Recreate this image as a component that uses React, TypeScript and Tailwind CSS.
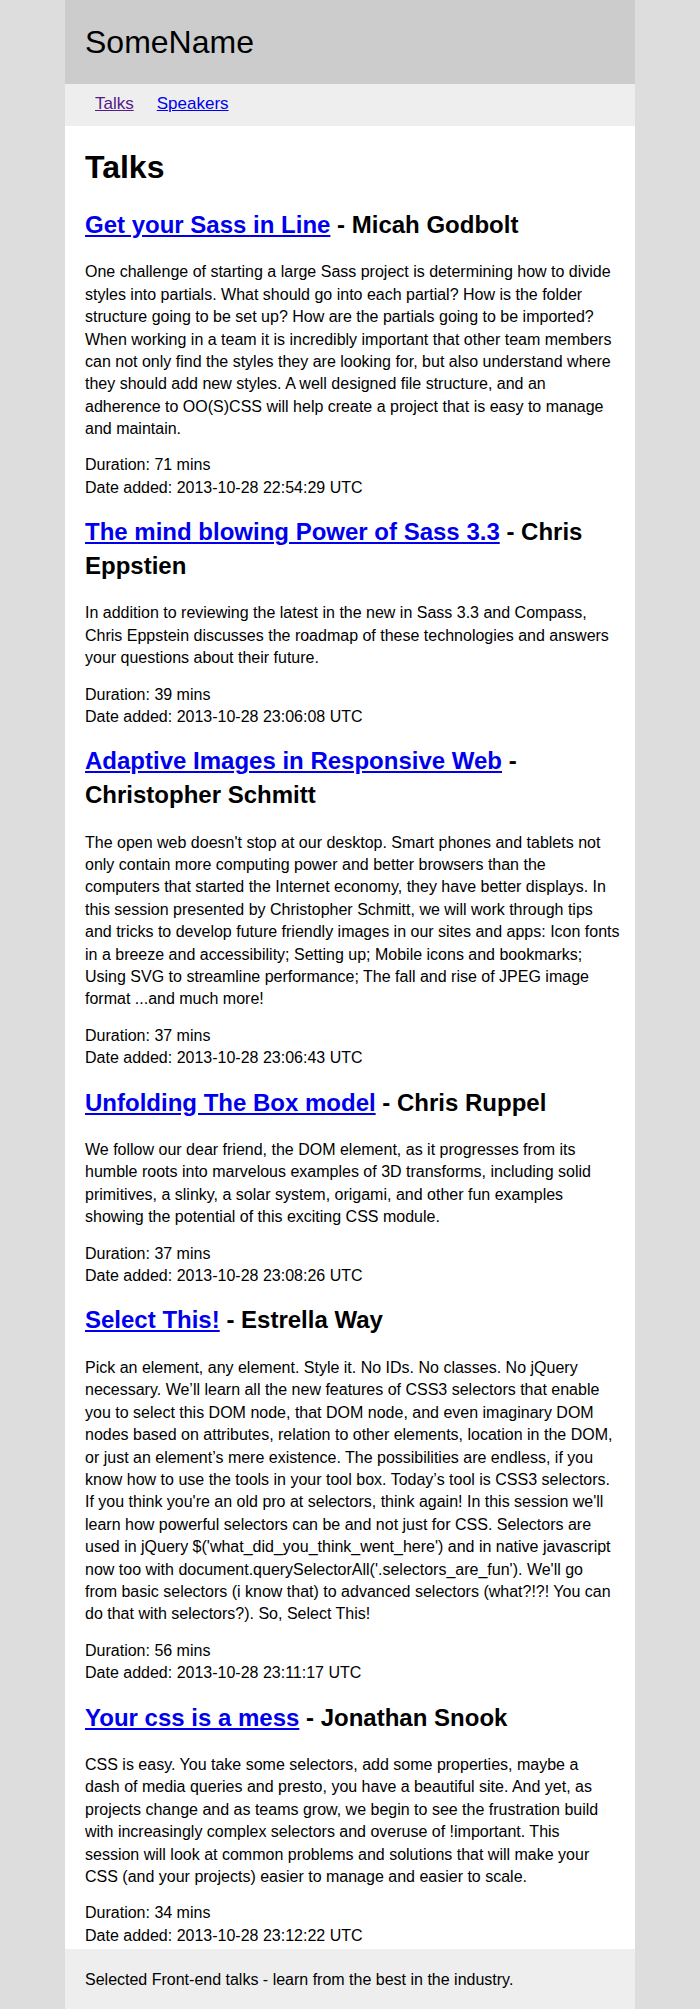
import React from "react";

type Talk = {
  title: string;
  speaker: string;
  description: string;
  duration: number;
  added: string;
  wide?: boolean;
};

const talks: Talk[] = [
  {
    title: "Get your Sass in Line",
    speaker: "Micah Godbolt",
    description:
      "One challenge of starting a large Sass project is determining how to divide styles into partials. What should go into each partial? How is the folder structure going to be set up? How are the partials going to be imported? When working in a team it is incredibly important that other team members can not only find the styles they are looking for, but also understand where they should add new styles. A well designed file structure, and an adherence to OO(S)CSS will help create a project that is easy to manage and maintain.",
    duration: 71,
    added: "2013-10-28 22:54:29 UTC",
  },
  {
    title: "The mind blowing Power of Sass 3.3",
    speaker: "Chris Eppstien",
    description:
      "In addition to reviewing the latest in the new in Sass 3.3 and Compass, Chris Eppstein discusses the roadmap of these technologies and answers your questions about their future.",
    duration: 39,
    added: "2013-10-28 23:06:08 UTC",
  },
  {
    title: "Adaptive Images in Responsive Web",
    speaker: "Christopher Schmitt",
    description:
      "The open web doesn't stop at our desktop. Smart phones and tablets not only contain more computing power and better browsers than the computers that started the Internet economy, they have better displays. In this session presented by Christopher Schmitt, we will work through tips and tricks to develop future friendly images in our sites and apps: Icon fonts in a breeze and accessibility; Setting up; Mobile icons and bookmarks; Using SVG to streamline performance; The fall and rise of JPEG image format ...and much more!",
    duration: 37,
    added: "2013-10-28 23:06:43 UTC",
    wide: true,
  },
  {
    title: "Unfolding The Box model",
    speaker: "Chris Ruppel",
    description:
      "We follow our dear friend, the DOM element, as it progresses from its humble roots into marvelous examples of 3D transforms, including solid primitives, a slinky, a solar system, origami, and other fun examples showing the potential of this exciting CSS module.",
    duration: 37,
    added: "2013-10-28 23:08:26 UTC",
  },
  {
    title: "Select This!",
    speaker: "Estrella Way",
    description:
      "Pick an element, any element. Style it. No IDs. No classes. No jQuery necessary. We\u2019ll learn all the new features of CSS3 selectors that enable you to select this DOM node, that DOM node, and even imaginary DOM nodes based on attributes, relation to other elements, location in the DOM, or just an element\u2019s mere existence. The possibilities are endless, if you know how to use the tools in your tool box. Today\u2019s tool is CSS3 selectors. If you think you're an old pro at selectors, think again! In this session we'll learn how powerful selectors can be and not just for CSS. Selectors are used in jQuery $('what_did_you_think_went_here') and in native javascript now too with document.querySelectorAll('.selectors_are_fun'). We'll go from basic selectors (i know that) to advanced selectors (what?!?! You can do that with selectors?). So, Select This!",
    duration: 56,
    added: "2013-10-28 23:11:17 UTC",
  },
  {
    title: "Your css is a mess",
    speaker: "Jonathan Snook",
    description:
      "CSS is easy. You take some selectors, add some properties, maybe a dash of media queries and presto, you have a beautiful site. And yet, as projects change and as teams grow, we begin to see the frustration build with increasingly complex selectors and overuse of !important. This session will look at common problems and solutions that will make your CSS (and your projects) easier to manage and easier to scale.",
    duration: 34,
    added: "2013-10-28 23:12:22 UTC",
  },
];

export default function App() {
  return (
    <div className="min-h-screen bg-[#dddddd] font-['Liberation_Sans',Arial,sans-serif] text-[16px] leading-[1.4] text-black">
      <div className="mx-auto w-[570px] bg-white">
        {/* Header */}
        <header className="bg-[#cccccc] px-5 py-[19.6px]">
          <div className="text-[32px] leading-[1.4] font-normal">SomeName</div>
        </header>

        {/* Nav */}
        <nav className="bg-[#eeeeee] pt-[7.6px] pb-[10.6px] pl-[30px]">
          <ul className="flex gap-[23px] text-[17px] leading-[23.8px]">
            <li>
              <a href="#" className="text-[#551a8b] underline">
                Talks
              </a>
            </li>
            <li>
              <a href="#" className="text-[#0000ee] underline">
                Speakers
              </a>
            </li>
          </ul>
        </nav>

        {/* Talks list */}
        <main className="px-5 pb-[2px]">
          <h1 className="mt-[19px] mb-[18px] text-[32px] font-bold leading-[1.4]">Talks</h1>
          {talks.map((t) => (
            <section key={t.title}>
              <h2 className="mt-4 mb-5 text-[24px] font-bold leading-[1.4]">
                <a href="#" className="text-[#0000ee] underline">
                  {t.title}
                </a>{" "}
                - {t.speaker}
              </h2>
              {/* the reference font runs a touch narrower; give this one room so "Icon fonts" stays together */}
              <p className={t.wide ? "mr-[-8px] mb-[14px]" : "mb-[14px]"}>{t.description}</p>
              <p>
                Duration: {t.duration} mins
                <br />
                Date added: {t.added}
              </p>
            </section>
          ))}
        </main>

        <footer className="bg-[#eeeeee] px-5 py-5">
          Selected Front-end talks - learn from the best in the industry.
        </footer>
      </div>
    </div>
  );
}
